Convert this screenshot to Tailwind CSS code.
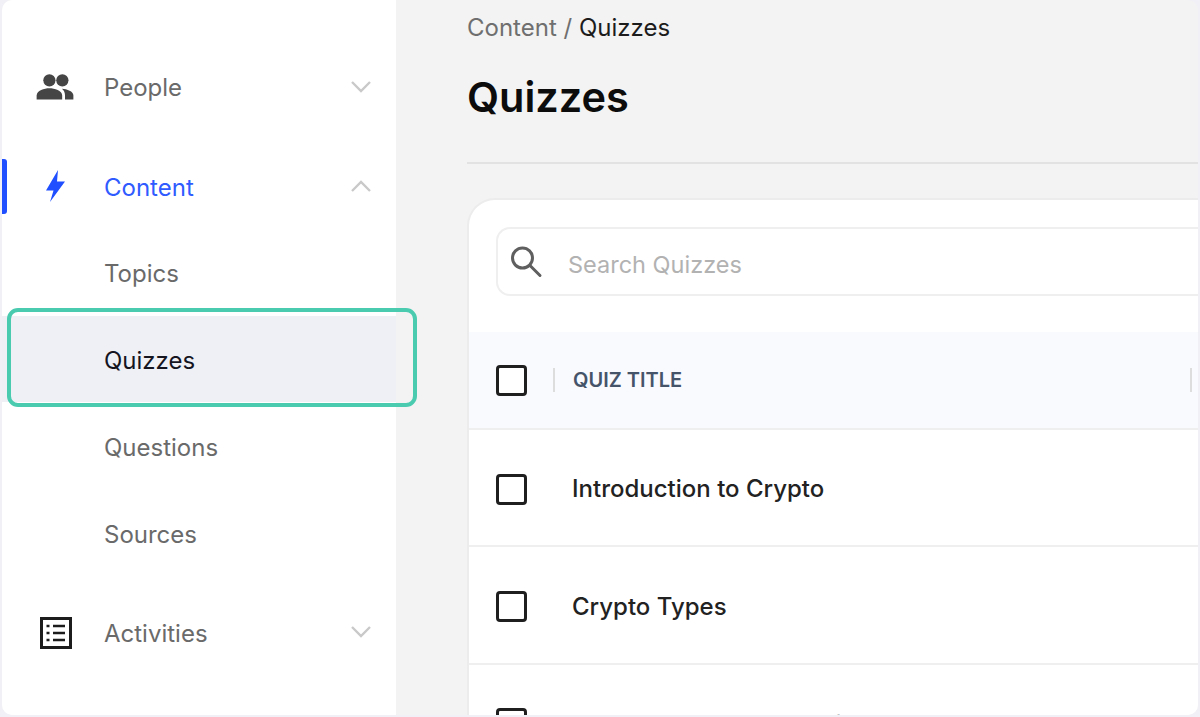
<!DOCTYPE html>
<html lang="en">
<head>
    <meta charset="UTF-8">
    <title>Quizzes</title>
    <script src="https://cdn.jsdelivr.net/npm/@tailwindcss/browser@4"></script>
</head>
<body class="bg-[#f0f0f6] font-['Inter',sans-serif] overflow-hidden">
    <div class="relative w-[1200px] h-[717px] overflow-hidden">
        <div class="flex h-[715px] w-[1196px] ml-[2px] rounded-[10px] overflow-hidden bg-[#f3f3f3]">
            <!-- sidebar -->
            <aside class="w-[394px] shrink-0 bg-white pt-[38px] text-[24px] text-[#6a6a6a]">
                <div class="flex items-center h-[100px] pl-[32px] pr-[24px]">
                    <svg class="w-[42px] h-[42px] mr-[28px] shrink-0" viewBox="0 0 24 24" fill="#454545"><circle cx="8.800" cy="7.600" r="3.500"/><circle cx="16.200" cy="7.600" r="3.500"/><path d="M1.500 18.500v-2.200c0-2.800 4.400-4.100 7.300-4.100s7.300 1.300 7.300 4.100v2.200z"/><path d="M17.700 18.500v-2.500c0-1.400-.6-2.700-1.800-3.600 3 .2 6.600 1.500 6.600 3.800v2.300z"/></svg>
                    <span class="flex-1">People</span>
                    <svg class="w-[22px] h-[22px]" viewBox="0 0 22 22" fill="none" stroke="#c9c9c9" stroke-width="2.400"><path d="M2 5l9 9 9-9"/></svg>
                </div>
                <div class="relative flex items-center h-[88px] mt-[5px] pl-[32px] pr-[24px] text-[#2f5bff]">
                    <div class="absolute left-0 top-[16px] w-[5px] h-[55px] bg-[#1f4fff] rounded-r-[3px]"></div>
                    <svg class="w-[42px] h-[42px] mr-[28px] shrink-0" viewBox="0 0 42 42" fill="#1f4fff"><path d="M24 4L12 24.500h7.500L16 36 31 15.500h-8z"/></svg>
                    <span class="flex-1 pt-[2px]">Content</span>
                    <svg class="w-[22px] h-[22px]" viewBox="0 0 22 22" fill="none" stroke="#c9c9c9" stroke-width="2.400"><path d="M2 15l9-9 9 9"/></svg>
                </div>
                <div class="flex items-center h-[85px] pt-[1px] pl-[102px]">Topics</div>
                <div class="flex items-center h-[86px] pt-[4px] pl-[102px] bg-[#eff0f6] text-[#15151f]">Quizzes</div>
                <div class="flex items-center h-[90px] pt-[1px] pl-[102px]">Questions</div>
                <div class="flex items-center h-[84px] pt-[1px] pl-[102px]">Sources</div>
                <div class="flex items-center h-[114px] pl-[32px] pr-[24px]">
                    <svg class="w-[42px] h-[42px] mr-[28px] shrink-0" viewBox="0 0 42 42" fill="none" stroke="#1c1c1c"><rect x="7.500" y="6.500" width="29" height="29" stroke-width="3"/><path d="M19 14h12M19 21h12M19 28h12M12.500 14h3M12.500 21h3M12.500 28h3" stroke-width="2.500"/></svg>
                    <span class="flex-1 pt-[2px]">Activities</span>
                    <svg class="w-[22px] h-[22px]" viewBox="0 0 22 22" fill="none" stroke="#c9c9c9" stroke-width="2.400"><path d="M2 5l9 9 9-9"/></svg>
                </div>
            </aside>

            <!-- main -->
            <main class="flex-1 pl-[71px] min-w-0">
                <div class="h-[55px] flex items-center text-[24px] text-[#6f6f6f]">Content /&nbsp;<span class="text-[#1c1c1c]">Quizzes</span></div>
                <h1 class="h-[109px] pt-[15px] text-[41.500px] leading-[54px] font-semibold text-[#0c0c0c] border-b-2 border-[#e2e2e2]">Quizzes</h1>
                <div class="mt-[34px] bg-white rounded-tl-[28px] border-l-2 border-t-2 border-[#ececec] h-[520px]">
                    <div class="pl-[27px] pt-[27px] pb-[36px]">
                        <div class="flex items-center h-[69px] rounded-l-[14px] border-2 border-r-0 border-[#efefef] pl-[11px]">
                            <svg class="w-[34px] h-[34px] mr-[25px]" viewBox="0 0 34 34" fill="none" stroke="#5f5f5f" stroke-width="3"><circle cx="13.500" cy="13" r="10"/><path d="M21 20.500L31 30.500" stroke-linecap="round"/></svg>
                            <span class="text-[23.500px] pt-[6px] text-[#b2b2b2]">Search Quizzes</span>
                        </div>
                    </div>
                    <div class="flex items-center h-[98px] pl-[27px] bg-[#f9fafe] border-b-2 border-[#efefef]">
                        <div class="w-[31px] h-[31px] rounded-[4px] border-[3px] border-[#1f1f1f] bg-white"></div>
                        <div class="w-[2px] h-[24px] bg-[#dddddd] ml-[26px]"></div>
                        <span class="ml-[18px] text-[20px] font-semibold text-[#46546a]">QUIZ TITLE</span>
                        <div class="w-[2px] h-[24px] bg-[#dddddd] ml-[508px]"></div>
                    </div>
                    <div class="flex items-center h-[117px] pt-[3px] pl-[27px] border-b-2 border-[#efefef]">
                        <div class="w-[31px] h-[31px] rounded-[4px] border-[3px] border-[#1f1f1f]"></div>
                        <span class="ml-[45px] text-[24px] font-medium text-[#222222]">Introduction to Crypto</span>
                    </div>
                    <div class="flex items-center h-[118px] pt-[3px] pl-[27px] border-b-2 border-[#efefef]">
                        <div class="w-[31px] h-[31px] rounded-[4px] border-[3px] border-[#1f1f1f]"></div>
                        <span class="ml-[45px] text-[24px] font-medium text-[#222222]">Crypto Types</span>
                    </div>
                    <div class="flex items-center h-[116px] pl-[27px]">
                        <div class="w-[31px] h-[31px] rounded-[4px] border-[3px] border-[#1f1f1f]"></div>
                        <span class="ml-[45px] pt-[3px] text-[24px] font-medium text-[#222222]">Exchanges and Uses of Crypto</span>
                    </div>
                </div>
            </main>
        </div>
        <!-- highlight around the selected item -->
        <div class="absolute left-[7px] top-[308px] w-[410px] h-[99px] rounded-[11px] border-[4px] border-[#4acbb0]"></div>
    </div>
</body>
</html>
